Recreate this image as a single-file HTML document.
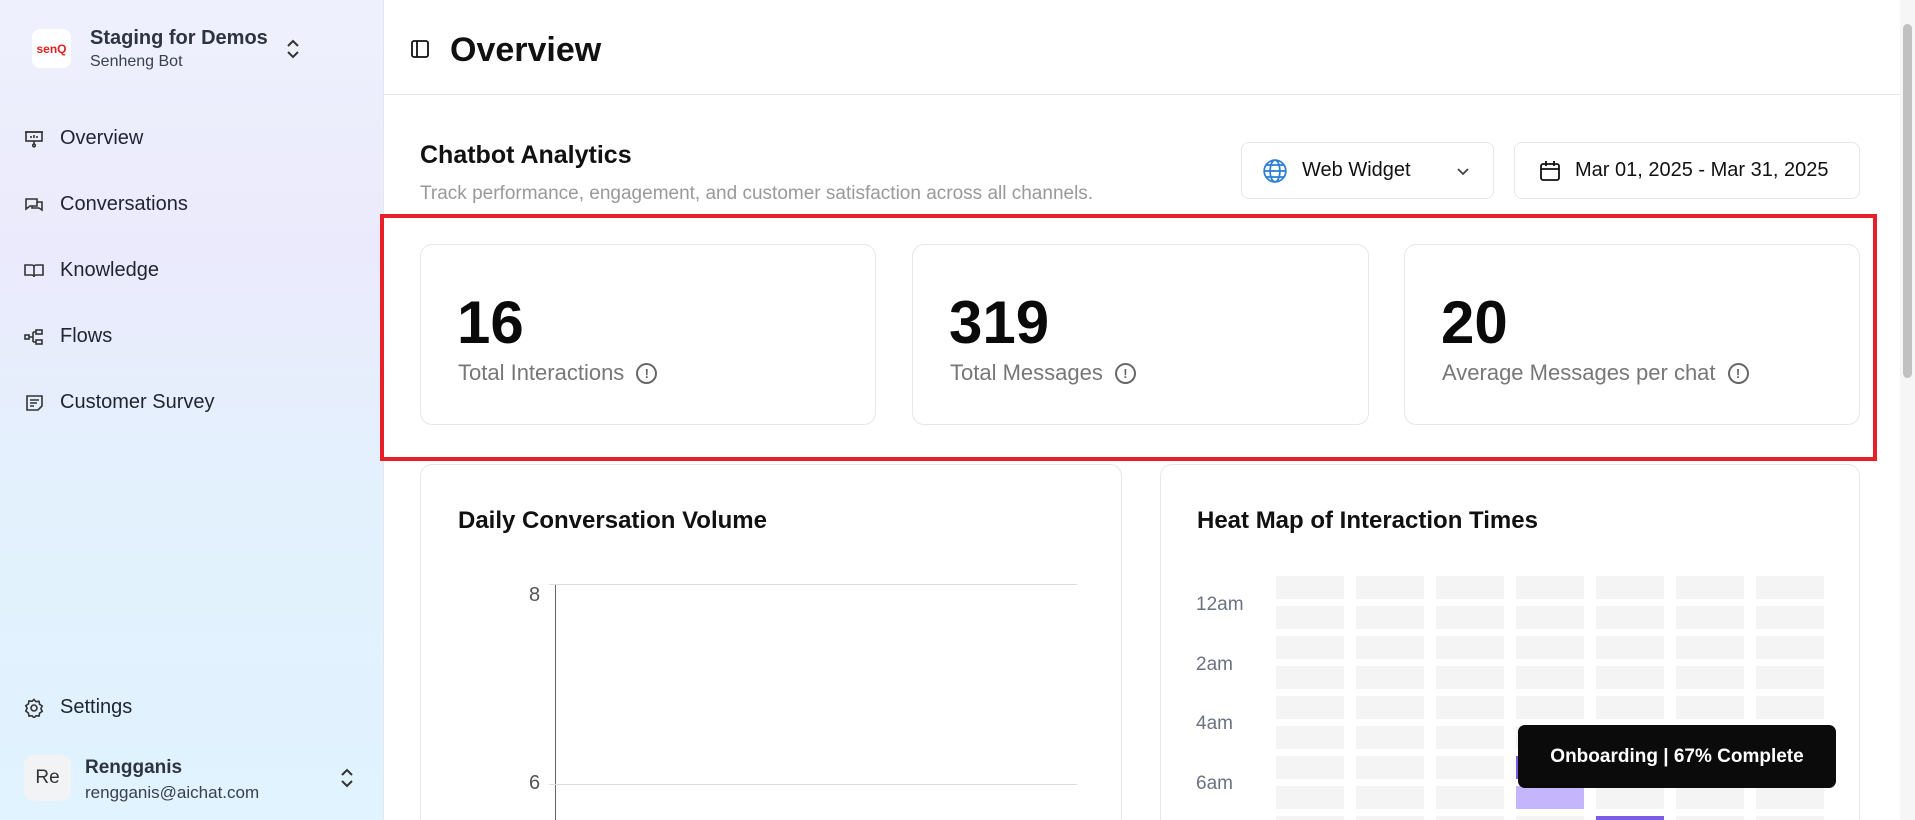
<!DOCTYPE html>
<html><head><meta charset="utf-8"><style>
*{box-sizing:border-box;margin:0;padding:0}
html,body{width:1915px;height:820px;overflow:hidden}
body{font-family:"Liberation Sans",sans-serif;background:#fff;color:#111}
#wrap{position:relative;width:1915px;height:820px;overflow:hidden}
.abs{position:absolute}
.sb{left:0;top:0;width:384px;height:820px;background:linear-gradient(180deg,#eef1fd 0%,#ebeafc 30%,#e3f1fd 60%,#e0f3fe 100%);border-right:1px solid #e3e6ea}
.nav{left:24px;display:flex;align-items:center;gap:16px;font-size:20px;color:#1f2430}
.nav svg{width:20px;height:20px;stroke:#333;fill:none;stroke-width:1.6}
.card{border:1px solid #e5e7eb;border-radius:12px;background:#fff}
.num{font-size:60px;font-weight:bold;color:#0a0a0a}
.lbl{font-size:22px;color:#777;display:flex;align-items:center;gap:12px}
.info{width:21px;height:21px;border:2px solid #666;border-radius:50%;font-size:13px;font-weight:bold;color:#666;display:flex;align-items:center;justify-content:center}
.cell{position:absolute;width:68px;height:23px;background:#f4f4f4}
.hl{font-size:19px;color:#6b7280}
</style></head><body><div id="wrap">
<div class="abs sb"></div>
<div class="abs" style="left:32px;top:29px;width:39px;height:39px;background:#fff;border-radius:8px;display:flex;align-items:center;justify-content:center;color:#e02020;font-weight:bold;font-size:12px">senQ</div>
<div class="abs" style="left:90px;top:27px;font-size:20px;font-weight:bold;color:#2d3340">Staging for Demos</div>
<div class="abs" style="left:90px;top:53px;font-size:16px;color:#3a404c">Senheng Bot</div>
<svg class="abs" style="left:283px;top:37px" width="20" height="24" viewBox="0 0 20 24" fill="none" stroke="#333" stroke-width="2"><path d="M5 9l5-5 5 5M5 15l5 5 5-5"/></svg>
<div class="abs nav" style="top:127px"><svg viewBox="0 0 20 20"><rect x="2" y="3" width="16" height="9"/><path d="M1 3h18M10 12v3M7 7v2M10 6v3M13 7v2"/><circle cx="10" cy="16.5" r="1.3"/></svg>Overview</div>
<div class="abs nav" style="top:193px"><svg viewBox="0 0 20 20"><path d="M2 4h11v7H6l-4 3zM13 7h5v8l-3-2H8v-2"/></svg>Conversations</div>
<div class="abs nav" style="top:259px"><svg viewBox="0 0 20 20"><path d="M1 4h7a2 2 0 012 2v10a2 2 0 00-2-2H1zM19 4h-7a2 2 0 00-2 2v10a2 2 0 012-2h7z"/></svg>Knowledge</div>
<div class="abs nav" style="top:325px"><svg viewBox="0 0 20 20"><rect x="1" y="8" width="4" height="4"/><rect x="12" y="3" width="6" height="4"/><rect x="12" y="13" width="6" height="4"/><path d="M5 10h4M9 5v10M9 5h3M9 15h3"/></svg>Flows</div>
<div class="abs nav" style="top:391px"><svg viewBox="0 0 20 20"><path d="M3 3h15v10l-4 4H3zM6 7h9M6 10h7M6 13h4"/></svg>Customer Survey</div>
<div class="abs nav" style="top:696px"><svg viewBox="0 0 20 20"><circle cx="10" cy="10" r="3"/><path d="M10 1.5l2 2.2 3-.4.6 3 2.6 1.7-1.3 2.7 1.3 2.7-2.6 1.7-.6 3-3-.4-2 2.2-2-2.2-3 .4-.6-3L1.8 13l1.3-2.7L1.8 7.6l2.6-1.7.6-3 3 .4z"/></svg>Settings</div>
<div class="abs" style="left:24px;top:755px;width:47px;height:46px;border-radius:10px;background:#f1f3f5;display:flex;align-items:center;justify-content:center;font-size:19px;color:#333">Re</div>
<div class="abs" style="left:85px;top:757px;font-size:19px;font-weight:bold;color:#2d3340">Rengganis</div>
<div class="abs" style="left:85px;top:783px;font-size:17px;color:#3a404c">rengganis@aichat.com</div>
<svg class="abs" style="left:337px;top:766px" width="20" height="24" viewBox="0 0 20 24" fill="none" stroke="#333" stroke-width="2"><path d="M5 9l5-5 5 5M5 15l5 5 5-5"/></svg>

<div class="abs" style="left:384px;top:94px;width:1516px;height:1px;background:#e5e7eb"></div>
<svg class="abs" style="left:410px;top:39px" width="20" height="20" viewBox="0 0 20 20" fill="none" stroke="#111" stroke-width="1.8"><rect x="2" y="2" width="16" height="16" rx="2"/><path d="M7 2v16"/></svg>
<div class="abs" style="left:450px;top:31px;font-size:34px;font-weight:bold;color:#111">Overview</div>

<div class="abs" style="left:420px;top:141px;font-size:25px;font-weight:bold;color:#111">Chatbot Analytics</div>
<div class="abs" style="left:420px;top:183px;font-size:19px;color:#999">Track performance, engagement, and customer satisfaction across all channels.</div>
<div class="abs card" style="left:1241px;top:142px;width:253px;height:57px;border-radius:8px;display:flex;align-items:center;padding-left:20px;font-size:20px;gap:14px">
<svg width="26" height="26" viewBox="0 0 24 24" fill="none" stroke="#2a7fd4" stroke-width="1.6"><circle cx="12" cy="12" r="10"/><ellipse cx="12" cy="12" rx="4.5" ry="10"/><path d="M2 12h20M4 6.5h16M4 17.5h16"/></svg>Web Widget
<svg style="position:absolute;right:22px" width="16" height="16" viewBox="0 0 16 16" fill="none" stroke="#444" stroke-width="1.8"><path d="M3 6l5 5 5-5"/></svg></div>
<div class="abs card" style="left:1514px;top:142px;width:346px;height:57px;border-radius:8px;display:flex;align-items:center;padding-left:24px;font-size:20px;gap:14px">
<svg width="22" height="22" viewBox="0 0 22 22" fill="none" stroke="#111" stroke-width="1.8"><rect x="2" y="4" width="18" height="16" rx="2"/><path d="M2 9h18M7 1v5M15 1v5"/></svg>Mar 01, 2025 - Mar 31, 2025</div>

<div class="abs" style="left:380px;top:214px;width:1497px;height:247px;border:4px solid #e6202a"></div>
<div class="abs card" style="left:420px;top:244px;width:456px;height:181px"></div>
<div class="abs card" style="left:912px;top:244px;width:457px;height:181px"></div>
<div class="abs card" style="left:1404px;top:244px;width:456px;height:181px"></div>
<div class="abs num" style="left:457px;top:288px">16</div>
<div class="abs num" style="left:949px;top:288px">319</div>
<div class="abs num" style="left:1441px;top:288px">20</div>
<div class="abs lbl" style="left:458px;top:360px">Total Interactions <span class="info">!</span></div>
<div class="abs lbl" style="left:950px;top:360px">Total Messages <span class="info">!</span></div>
<div class="abs lbl" style="left:1442px;top:360px">Average Messages per chat <span class="info">!</span></div>

<div class="abs card" style="left:420px;top:464px;width:702px;height:400px"></div>
<div class="abs card" style="left:1160px;top:464px;width:700px;height:400px"></div>
<div class="abs" style="left:458px;top:507px;font-size:24px;font-weight:bold;color:#111">Daily Conversation Volume</div>
<div class="abs" style="left:1197px;top:507px;font-size:24px;font-weight:bold;color:#111">Heat Map of Interaction Times</div>
<div class="abs" style="left:555px;top:584px;width:1px;height:240px;background:#666"></div>
<div class="abs" style="left:549px;top:584px;width:528px;height:1px;background:#ddd"></div>
<div class="abs" style="left:549px;top:784px;width:528px;height:1px;background:#ddd"></div>
<div class="abs" style="left:529px;top:584px;font-size:20px;color:#555">8</div>
<div class="abs" style="left:529px;top:772px;font-size:20px;color:#555">6</div>
<div class="abs hl" style="left:1196px;top:594px">12am</div>
<div class="abs hl" style="left:1196px;top:654px">2am</div>
<div class="abs hl" style="left:1196px;top:713px">4am</div>
<div class="abs hl" style="left:1196px;top:773px">6am</div>
<div id="hm"></div>
<div class="abs" style="left:1518px;top:725px;width:318px;height:63px;background:#0b0b0b;border-radius:7px;color:#fff;font-size:19px;font-weight:bold;display:flex;align-items:center;justify-content:center">Onboarding | 67% Complete</div>
<div class="abs" style="left:1900px;top:0;width:15px;height:820px;background:#f6f6f6"></div>
<div class="abs" style="left:1903px;top:24px;width:9px;height:354px;background:#c1c1c1;border-radius:5px"></div>
</div>
<script>
var h='';for(var r=0;r<9;r++)for(var c=0;c<7;c++){var bg='#f4f4f4';if(r==7&&c==3)bg='#c4b5fd';if(r==6&&c==3)bg='#7c5ce6';if(r==8&&c==4)bg='#7c5ce6';h+='<div class="cell" style="left:'+(1276+c*80)+'px;top:'+(576+r*30)+'px;background:'+bg+'"></div>';}
document.getElementById('hm').outerHTML=h;
</script>
</body></html>
